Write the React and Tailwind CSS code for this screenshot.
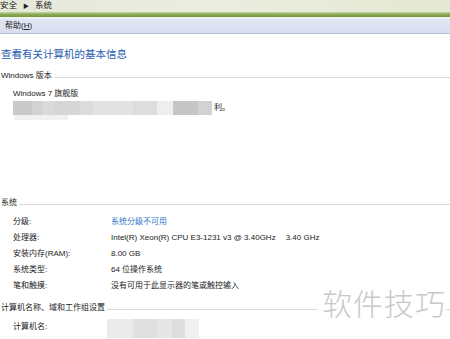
import React from "react";

const F = { fontFamily: '"Liberation Sans", "Noto Sans CJK SC", sans-serif' };

function Section({ title, className = "" }) {
  return (
    <div className={"flex h-[12px] items-center " + className}>
      <span className="pl-[1px] pr-[2px] text-[8px] leading-none text-[#222]">{title}</span>
      <div className="mt-[3px] h-px flex-1 bg-[#d9d9d9]" />
    </div>
  );
}

function Row({ label, children, className = "" }) {
  return (
    <div className={"flex h-[16px] items-center text-[8px] leading-none text-[#222] " + className}>
      <div className="w-[111px] pl-[13px]">{label}</div>
      <div className="flex-1">{children}</div>
    </div>
  );
}

function Blur({ segs, className = "" }) {
  return (
    <div className={"flex " + className}>
      {segs.map(([w, c], i) => (
        <div key={i} style={{ width: w, background: c }} className="h-full" />
      ))}
    </div>
  );
}

export default function App() {
  return (
    <div className="relative h-[339px] w-[450px] overflow-hidden bg-white" style={F}>
      {/* breadcrumb bar */}
      <div className="flex h-[12px] items-end bg-gradient-to-r from-[#e6e9da] via-[#eaeddf] to-[#e4e9d2] pb-[3px] text-[8.5px] leading-none text-[#222]">
        <span>安全</span>
        <span className="mx-[6px] text-[6px]">▶</span>
        <span>系统</span>
      </div>
      <div className="h-[5px] bg-gradient-to-b from-[#c9d7a8] via-[#8aa852] to-[#7a9a44]" />
      <div className="h-[2px] bg-[#eef1f4]" />
      {/* menu bar */}
      <div className="flex h-[15px] items-center border-b border-[#b8c0d2] bg-gradient-to-b from-[#e2e7f4] to-[#d8def0] pl-[5px] text-[8px] leading-none text-[#222]">
        帮助(<span className="underline">H</span>)
      </div>

      {/* heading */}
      <div className="mt-[12px] flex h-[16px] items-center pl-[1px] text-[10.5px] leading-none text-[#1f5bb0]">
        查看有关计算机的基本信息
      </div>

      <Section title="Windows 版本" className="mt-[8px]" />
      <div className="mt-[6px] flex h-[12px] items-center pl-[13px] text-[8px] leading-none text-[#222]">
        Windows 7 旗舰版
      </div>
      <div className="flex h-[15px] items-center pl-[13px]">
        <Blur
          className="h-[14px]"
          segs={[
            [19, "#c9c9c9"],
            [10, "#d2d2d2"],
            [11, "#dadada"],
            [27, "#d6d6d6"],
            [13, "#dcdcdc"],
            [40, "#e2e2e2"],
            [24, "#dddddd"],
            [16, "#eeeeee"],
            [25, "#c6c6c6"],
            [14, "#d2d2d2"],
          ]}
        />
        <span className="pl-[2px] text-[8px] leading-none text-[#222]">利。</span>
      </div>
      <Blur className="ml-[14px] h-[5px]" segs={[[54, "#f1f1f1"]]} />

      <Section title="系统" className="mt-[77px]" />
      <Row label="分级:" className="mt-[5px]">
        <span className="text-[#2f74c8]">系统分级不可用</span>
      </Row>
      <Row label="处理器:">
        Intel(R) Xeon(R) CPU E3-1231 v3 @ 3.40GHz<span className="pl-[10px]">3.40 GHz</span>
      </Row>
      <Row label="安装内存(RAM):">8.00 GB</Row>
      <Row label="系统类型:">64 位操作系统</Row>
      <Row label="笔和触摸:">没有可用于此显示器的笔或触控输入</Row>

      <Section title="计算机名称、域和工作组设置" className="mt-[8px]" />
      <div className="mt-[5px] flex h-[16px] items-center text-[8px] leading-none text-[#222]">
        <div className="w-[107px] pl-[13px]">计算机名:</div>
        <Blur
          className="h-[19px] self-start"
          segs={[
            [26, "#ebebeb"],
            [24, "#e0e0e0"],
            [15, "#e6e6e6"],
            [13, "#dedede"],
            [14, "#f0f0f0"],
          ]}
        />
      </div>

      {/* watermark */}
      <div
        className="absolute left-[317px] top-[283px] bg-white pl-[5px] text-[30px] font-light leading-[38px] tracking-[1px] text-[#c9c9c9]"
        style={{ fontFamily: '"Noto Sans CJK SC", sans-serif' }}
      >
        软件技巧
      </div>
    </div>
  );
}
